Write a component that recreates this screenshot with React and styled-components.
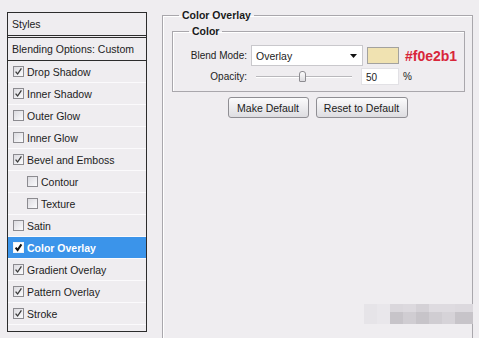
import React from 'react'
import styled, { createGlobalStyle } from 'styled-components'

const GlobalStyle = createGlobalStyle`
  html, body {
    margin: 0;
    padding: 0;
    background: #efedf0;
  }
  body {
    width: 479px;
    height: 338px;
    overflow: hidden;
    font-family: "Liberation Sans", Arial, sans-serif;
    color: #1c1c1c;
  }
`

const Page = styled.div`
  position: relative;
  display: flex;
  align-items: flex-start;
  gap: 15px;
  width: 479px;
  height: 338px;
  padding-left: 7px;
  box-sizing: border-box;
  overflow: hidden;
`

/* ---------- left styles list ---------- */

const StylePanel = styled.div`
  width: 140px;
  height: 320px;
  margin-top: 12px;
  box-sizing: border-box;
  border: 1px solid #2c2c2c;
  background: #efedf0;
  font-size: 10.5px;
`

const Header = styled.div`
  height: 22px;
  line-height: 22px;
  padding-left: 4px;
  border-bottom: 3px double #2c2c2c;
`

const Blending = styled.div`
  height: 22px;
  line-height: 22px;
  padding-left: 4px;
  border-bottom: 1px solid #2c2c2c;
`

const Row = styled.div`
  display: flex;
  align-items: center;
  gap: 3px;
  height: 21px;
  padding-left: ${p => (p.indent ? 19 : 5)}px;
  border-bottom: 1px solid #fbfafc;
  background: ${p => (p.active ? '#3b94ea' : 'transparent')};
  color: ${p => (p.active ? '#fff' : '#1c1c1c')};
  font-weight: ${p => (p.active ? 700 : 400)};
`

const Box = styled.span`
  display: inline-flex;
  align-items: center;
  justify-content: center;
  width: 11px;
  height: 11px;
  box-sizing: border-box;
  border: 1px solid ${p => (p.active ? '#f4f4f4' : '#8c8b90')};
  background: ${p => (p.active ? '#fff' : 'linear-gradient(135deg, #dcdbe0, #fbfbfd)')};
`

const Check = ({ on, active }) => (
  <Box active={active}>
    {on && (
      <svg width="9" height="9" viewBox="0 0 9 9">
        <path
          d="M1.6 4.6 L3.6 7 L7.4 1.4"
          fill="none"
          stroke={active ? '#111' : '#3a3a3a'}
          strokeWidth={active ? 2 : 1.3}
        />
      </svg>
    )}
  </Box>
)

const styleItems = [
  { name: 'Drop Shadow', on: true },
  { name: 'Inner Shadow', on: true },
  { name: 'Outer Glow', on: false },
  { name: 'Inner Glow', on: false },
  { name: 'Bevel and Emboss', on: true },
  { name: 'Contour', on: false, indent: true },
  { name: 'Texture', on: false, indent: true },
  { name: 'Satin', on: false },
  { name: 'Color Overlay', on: true, active: true },
  { name: 'Gradient Overlay', on: true },
  { name: 'Pattern Overlay', on: true },
  { name: 'Stroke', on: true },
]

/* ---------- right settings ---------- */

const Group = styled.fieldset`
  margin: 9px 0 0;
  padding: 0;
  width: 311px;
  height: 345px;
  box-sizing: border-box;
  border: 1px solid #a9a7ac;
  box-shadow: inset 1px 1px 0 #fff;
`

const Legend = styled.legend`
  margin-left: 16px;
  padding: 0 3px;
  font-size: 10.5px;
  line-height: 12px;
  font-weight: 700;
  color: #1a1a1a;
`

const SubGroup = styled.fieldset`
  margin: 4px 7px 0 9px;
  padding: 8px 0 6px;
  box-sizing: border-box;
  border: 1px solid #a9a7ac;
  box-shadow: inset 1px 1px 0 #fff;
`

const FieldRow = styled.div`
  display: flex;
  align-items: center;
  height: ${p => p.h}px;
  margin-top: ${p => p.gap || 0}px;
  font-size: 10px;
`

const Label = styled.span`
  width: 74px;
  margin-right: 4px;
  text-align: right;
  color: #222;
`

const Select = styled.div`
  display: flex;
  align-items: center;
  justify-content: space-between;
  width: 112px;
  height: 21px;
  box-sizing: border-box;
  padding: 0 5px 0 4px;
  background: #fff;
  border: 1px solid #c9c8cc;
  font-size: 10.5px;
`

const Swatch = styled.div`
  width: 32px;
  height: 17px;
  margin-left: 4px;
  box-sizing: border-box;
  border: 1px solid #a3a29f;
  background: ${p => p.color};
`

const Hex = styled.span`
  margin-left: 6px;
  font-size: 14px;
  font-weight: 700;
  color: #d8263a;
`

const Slider = styled.div`
  position: relative;
  width: 96px;
  height: 17px;
  margin: 0 9px 0 5px;
`

const Track = styled.div`
  position: absolute;
  left: 0;
  right: 0;
  top: 8px;
  height: 1px;
  background: #b9b8bc;
  border-bottom: 1px solid #fff;
`

const Thumb = styled.div`
  position: absolute;
  top: 3px;
  width: 7px;
  height: 11px;
  margin-left: -5px;
  box-sizing: border-box;
  border: 1px solid #8d8c91;
  border-radius: 3px 3px 1px 1px;
  background: linear-gradient(#fdfdfd, #dddce0);
`

const Input = styled.div`
  width: 38px;
  height: 17px;
  line-height: 17px;
  box-sizing: border-box;
  padding-left: 4px;
  background: #fff;
  border: 1px solid #e2e1e5;
  font-size: 10px;
`

const Unit = styled.span`
  margin-left: 4px;
  font-size: 10px;
`

const Buttons = styled.div`
  display: flex;
  justify-content: center;
  gap: 7px;
  margin-top: 5px;
`

const Button = styled.button`
  width: ${p => p.w}px;
  height: 21px;
  padding: 0;
  border: 1px solid #8f8e93;
  border-radius: 3px;
  background: linear-gradient(#fbfbfc, #dedde1);
  font-family: inherit;
  font-size: 10.5px;
  color: #1c1c1c;
`

/* ---------- pixelated watermark ---------- */

const Mosaic = styled.div`
  position: absolute;
  left: 364px;
  top: 304px;
  display: grid;
  grid-template-columns: 13px repeat(6, 13px) 18px;
  grid-template-rows: 8px 12px;
`

const Tile = styled.div`
  background: ${p => p.c};
  grid-row: ${p => p.span || 'auto'};
`

const topTiles = ['#e9e7eb', '#dad7dc', '#dcd9de', '#d4d1d6', '#dedbe0', '#dedbe0', '#dcd9de']
const bottomTiles = ['#e9e7eb', '#c7c4c9', '#d0cdd2', '#c7c4c9', '#d0cdd2', '#d6d3d8', '#c7c4c9']

export default function App() {
  const opacity = 50
  return (
    <Page>
      <GlobalStyle />
      <StylePanel>
        <Header>Styles</Header>
        <Blending>Blending Options: Custom</Blending>
        {styleItems.map(item => (
          <Row key={item.name} indent={item.indent} active={item.active}>
            <Check on={item.on} active={item.active} />
            <span>{item.name}</span>
          </Row>
        ))}
      </StylePanel>

      <Group>
        <Legend>Color Overlay</Legend>
        <SubGroup>
          <Legend>Color</Legend>
          <FieldRow h={21}>
            <Label>Blend Mode:</Label>
            <Select>
              <span>Overlay</span>
              <svg width="7" height="4" viewBox="0 0 7 4">
                <polygon points="0,0 7,0 3.5,4" fill="#111" />
              </svg>
            </Select>
            <Swatch color="#f0e2b1" />
            <Hex>#f0e2b1</Hex>
          </FieldRow>
          <FieldRow h={17} gap={2}>
            <Label>Opacity:</Label>
            <Slider>
              <Track />
              <Thumb style={{ left: `${opacity}%` }} />
            </Slider>
            <Input>{opacity}</Input>
            <Unit>%</Unit>
          </FieldRow>
        </SubGroup>
        <Buttons>
          <Button w={81}>Make Default</Button>
          <Button w={92}>Reset to Default</Button>
        </Buttons>
      </Group>

      <Mosaic>
        {topTiles.map((c, i) => <Tile key={'t' + i} c={c} />)}
        <Tile c="#e6e4e8" span="1 / span 2" />
        {bottomTiles.map((c, i) => <Tile key={'b' + i} c={c} />)}
      </Mosaic>
    </Page>
  )
}
